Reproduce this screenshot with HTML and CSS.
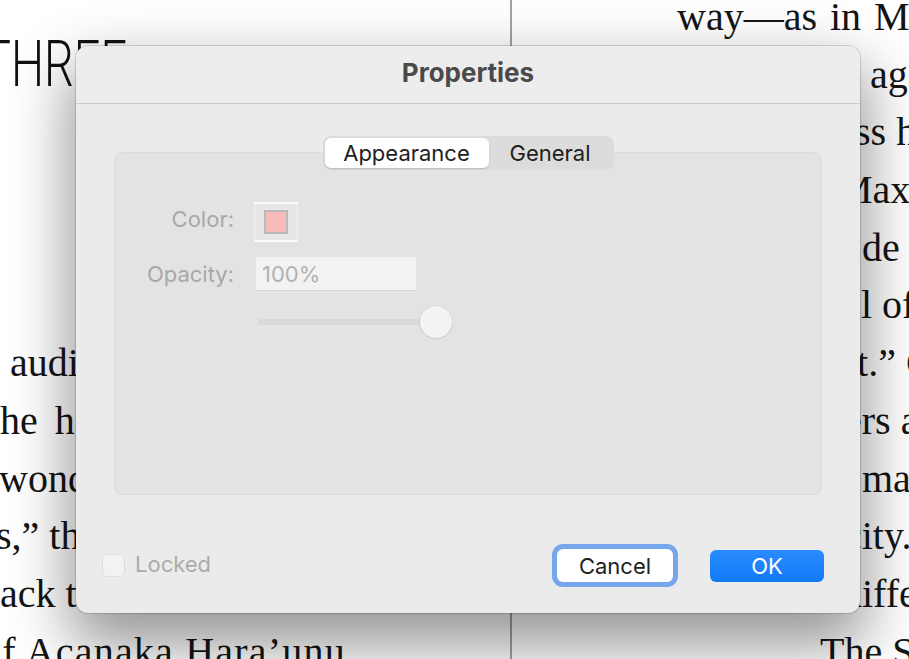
FILE: index.html
```html
<!DOCTYPE html>
<html>
<head>
<meta charset="utf-8">
<link rel="stylesheet" href="styles.css">
</head>
<body>
<div class="page">
  <div class="col left">
    <div class="chapter"><span class="chapter-text">THREE</span></div>
    <div class="ln l6">audience to the</div>
    <div class="ln l7">he had never</div>
    <div class="ln l8">wonder of it</div>
    <div class="ln l9">s,” they said</div>
    <div class="ln l10">ack to the</div>
    <div class="ln l11">of Acanaka Hara’unu</div>
  </div>
  <div class="rule"></div>
  <div class="col right">
    <div class="ln r0">way—as in Mem</div>
    <div class="ln r1">again</div>
    <div class="ln r2">ss his</div>
    <div class="ln r3">Max</div>
    <div class="ln r4">de</div>
    <div class="ln r5">l of</div>
    <div class="ln r6">it.” Cl</div>
    <div class="ln r7">ers an</div>
    <div class="ln r8">man</div>
    <div class="ln r9">city.</div>
    <div class="ln r10">differ</div>
    <div class="ln r11">The Sea</div>
  </div>
</div>

<div class="dialog">
  <div class="titlebar">Properties</div>
  <div class="body">
    <div class="seg">
      <div class="seg-item seg-on">Appearance</div>
      <div class="seg-item seg-off">General</div>
    </div>
    <div class="tabbox">
      <div class="label label-color">Color:</div>
      <div class="swatch"><div class="swatch-fill"></div></div>
      <div class="label">Opacity:</div>
      <div class="field">100%</div>
      <div></div>
      <div class="slider"><div class="track"></div><div class="knob"></div></div>
    </div>
  </div>
  <div class="footer">
    <div class="check"></div>
    <div class="check-label">Locked</div>
    <div class="spacer"></div>
    <div class="focus-ring"><div class="btn btn-cancel">Cancel</div></div>
    <div class="btn btn-ok">OK</div>
  </div>
</div>
</body>
</html>
```
FILE: styles.css
```css
html, body {
  margin: 0;
  padding: 0;
  width: 909px;
  height: 659px;
  overflow: hidden;
  background: #ffffff;
}

.page {
  display: flex;
  margin-top: -12px;
  height: 700px;
  font-family: "Liberation Serif", "Times New Roman", serif;
  font-size: 40px;
  color: #141414;
}

.col {
  overflow: hidden;
}

.left {
  width: 510px;
}

.rule {
  width: 2px;
  background: #a3a3a3;
  margin-top: 12px;
}

.right {
  flex: 1;
}

.ln {
  height: 57.7px;
  line-height: 57.7px;
  white-space: nowrap;
}

.chapter {
  height: 346.2px;
  font-family: Roboto, "Noto Sans", sans-serif;
  font-weight: 300;
  font-size: 65px;
  line-height: 1;
  color: #111;
}

.chapter-text {
  display: inline-block;
  margin-top: 44px;
  margin-left: -17px;
  transform: scaleX(0.72);
  transform-origin: left center;
}

.l6 { padding-left: 10px; }
.l7 { margin-left: 0; word-spacing: 7px; }
.l8 { margin-left: -1px; }
.l9 { margin-left: -4px; }
.l10 { margin-left: 0; }
.l11 { margin-left: -19px; letter-spacing: 1.2px; }

.r0 { padding-left: 165px; word-spacing: 3px; }
.r1 { padding-left: 358px; }
.r2 { padding-left: 343px; }
.r3 { padding-left: 325px; }
.r4 { padding-left: 350px; }
.r5 { padding-left: 349px; }
.r6 { padding-left: 334px; }
.r7 { padding-left: 332px; }
.r8 { padding-left: 350px; }
.r9 { padding-left: 332px; }
.r10 { padding-left: 330px; }
.r11 { padding-left: 308px; }

/* Dialog */
.dialog {
  position: absolute;
  left: 76px;
  top: 46px;
  width: 784px;
  height: 567px;
  box-sizing: border-box;
  background: #ebebeb;
  border-radius: 12px;
  box-shadow: 0 0 0 1px rgba(0, 0, 0, 0.14), 0 26px 60px 6px rgba(0, 0, 0, 0.42);
  display: flex;
  flex-direction: column;
  font-family: Inter, "Noto Sans", sans-serif;
  overflow: hidden;
}

.titlebar {
  height: 53px;
  padding-bottom: 4px;
  border-bottom: 1px solid #cbcbcb;
  background: #ededed;
  display: flex;
  align-items: center;
  justify-content: center;
  font-weight: 700;
  font-size: 26px;
  color: #4a4a4a;
}

.body {
  padding: 32px 38px 0;
  display: flex;
  flex-direction: column;
}

.seg {
  align-self: center;
  position: relative;
  z-index: 1;
  display: flex;
  height: 34px;
  box-sizing: border-box;
  padding: 2px;
  background: #dcdcdc;
  border-radius: 8px;
}

.seg-item {
  display: flex;
  align-items: center;
  justify-content: center;
  font-size: 22px;
  color: #1e1e1e;
  border-radius: 6px;
}

.seg-on {
  width: 164px;
  background: #ffffff;
  box-shadow: 0 1px 1.5px rgba(0, 0, 0, 0.16);
}

.seg-off {
  width: 123px;
}

.tabbox {
  margin-top: -18px;
  height: 343px;
  box-sizing: border-box;
  background: #e3e3e3;
  border: 1px solid #dcdcdc;
  border-radius: 8px;
  padding-top: 49px;
  display: grid;
  grid-template-columns: 119px auto;
  grid-template-rows: 40px 34px 32px;
  column-gap: 20px;
  row-gap: 15px;
  align-content: start;
  justify-content: start;
}

.label {
  justify-self: end;
  align-self: center;
  font-size: 22px;
  color: #a8a8a8;
}

.label-color {
  margin-bottom: 6px;
}

.swatch {
  width: 44px;
  height: 40px;
  box-sizing: border-box;
  border-top: 2px solid #fbfbfb;
  border-bottom: 2px solid #fbfbfb;
  border-left: 1px solid #f1f1f1;
  border-right: 1px solid #f1f1f1;
  background: #e7e7e7;
  display: flex;
  align-items: center;
  justify-content: center;
}

.swatch-fill {
  width: 24px;
  height: 24px;
  box-sizing: border-box;
  border: 2px solid #bababa;
  background: #f9baba;
}

.field {
  margin-left: 2px;
  width: 160px;
  height: 34px;
  box-sizing: border-box;
  background: #f2f2f2;
  border-bottom: 1px solid #d6d6d6;
  padding-left: 6px;
  display: flex;
  align-items: center;
  font-size: 22px;
  color: #b2b2b2;
}

.slider {
  position: relative;
  margin-left: 4px;
  width: 194px;
  height: 32px;
}

.track {
  position: absolute;
  left: 0;
  right: 10px;
  top: 13px;
  height: 6px;
  border-radius: 3px;
  background: #d9d9d9;
}

.knob {
  position: absolute;
  right: 0;
  top: 0;
  width: 32px;
  height: 32px;
  border-radius: 50%;
  background: #f3f3f3;
  box-shadow: 0 0.5px 2px rgba(0, 0, 0, 0.18);
}

.footer {
  margin-top: 49px;
  height: 43px;
  padding: 0 36px 0 26px;
  display: flex;
  align-items: center;
}

.check {
  width: 23px;
  height: 23px;
  box-sizing: border-box;
  border-radius: 5px;
  background: #f2f2f2;
  border: 1px solid #dedede;
}

.check-label {
  margin-left: 10px;
  margin-bottom: 4px;
  font-size: 22px;
  color: #ababab;
}

.spacer {
  flex: 1;
}

.focus-ring {
  padding: 5px;
  border-radius: 11px;
  background: #76a6ec;
}

.btn {
  display: flex;
  align-items: center;
  justify-content: center;
  font-size: 22px;
  border-radius: 6px;
  box-sizing: border-box;
}

.btn-cancel {
  width: 116px;
  height: 33px;
  background: #ffffff;
  color: #212121;
}

.btn-ok {
  margin-left: 32px;
  width: 114px;
  height: 32px;
  background: linear-gradient(#2a8cff, #1279f5);
  color: #ffffff;
}
```
